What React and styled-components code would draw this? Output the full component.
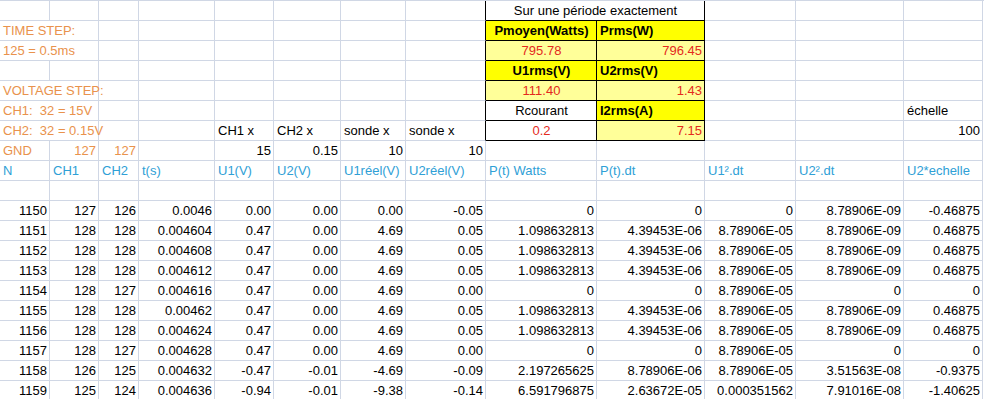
import styled, { createGlobalStyle } from "styled-components";

const GlobalStyle = createGlobalStyle`
  html, body {
    margin: 0;
    padding: 0;
    background: #ffffff;
  }
  body {
    font-family: "Liberation Sans", Arial, sans-serif;
    font-size: 13px;
    color: #000000;
    overflow: hidden;
  }
`;

const GRID = "#d0d7e5";
const ORANGE = "#e9924c";
const BLUE = "#2fa0d6";
const RED = "#e42a1d";
const YELLOW = "#ffff00";
const PALE = "#ffff99";

const COLUMNS = [50, 49, 40, 76, 59, 67, 65, 80, 111, 108, 91, 108, 79];

const Sheet = styled.div`
  width: 984px;
  height: 399px;
  overflow: hidden;
  border-top: 1px solid ${GRID};
  box-sizing: border-box;
  display: flex;
  flex-direction: column;
`;

const Row = styled.div`
  display: grid;
  grid-template-columns: ${COLUMNS.map((w) => `${w}px`).join(" ")};
  height: 20px;
  flex-shrink: 0;
`;

const Cell = styled.div`
  grid-column: span ${(p) => p.$span || 1};
  box-sizing: border-box;
  height: 20px;
  padding: 0 2px 0 3px;
  line-height: 19px;
  white-space: pre;
  overflow: visible;
  border-right: 1px solid ${(p) => (p.$box || p.$edge ? "#000" : GRID)};
  border-bottom: 1px solid ${(p) => (p.$box ? "#000" : GRID)};
  background: ${(p) => p.$bg || "transparent"};
  color: ${(p) => p.$color || "#000"};
  font-weight: ${(p) => (p.$bold ? 700 : 400)};
  text-align: ${(p) => p.$align || "left"};
`;

const e = {};
const edge = { edge: true };
const lbl = (t, span = 2) => ({ t, span, color: ORANGE });
const head = (t) => ({ t, bold: true, bg: YELLOW, box: true });
const val = (t, align = "right") => ({ t, align, color: RED, bg: PALE, box: true });
const num = (t) => ({ t, align: "right" });
const blanks = (n) => Array.from({ length: n }, () => e);

const topRows = [
  [...blanks(7), edge, { t: "Sur une période exactement", span: 2, align: "center", box: true }, ...blanks(3)],
  [lbl("TIME STEP:"), ...blanks(5), edge, { ...head("Pmoyen(Watts)"), align: "center" }, head("Prms(W)"), ...blanks(3)],
  [lbl("125 = 0.5ms"), ...blanks(5), edge, val("795.78", "center"), val("796.45"), ...blanks(3)],
  [...blanks(7), edge, { ...head("U1rms(V)"), align: "center" }, head("U2rms(V)"), ...blanks(3)],
  [lbl("VOLTAGE STEP:"), ...blanks(5), edge, val("111.40", "center"), val("1.43"), ...blanks(3)],
  [lbl("CH1:  32 = 15V"), ...blanks(5), edge, { t: "Rcourant", align: "center", box: true }, head("I2rms(A)"), e, e, { t: "échelle" }],
  [
    lbl("CH2:  32 = 0.15V"), e, e,
    { t: "CH1 x" }, { t: "CH2 x" }, { t: "sonde x" }, { t: "sonde x", edge: true },
    { t: "0.2", align: "center", color: RED, box: true }, val("7.15"), e, e, num("100"),
  ],
  [
    lbl("GND", 1), { t: "127", align: "right", color: ORANGE }, { t: "127", align: "right", color: ORANGE }, e,
    num("15"), num("0.15"), num("10"), num("10"), ...blanks(5),
  ],
  ["N", "CH1", "CH2", "t(s)", "U1(V)", "U2(V)", "U1réel(V)", "U2réel(V)", "P(t) Watts", "P(t).dt", "U1².dt", "U2².dt", "U2*echelle"].map(
    (t) => ({ t, color: BLUE })
  ),
  blanks(13),
];

const data = [
  ["1150", "127", "126", "0.0046", "0.00", "0.00", "0.00", "-0.05", "0", "0", "0", "8.78906E-09", "-0.46875"],
  ["1151", "128", "128", "0.004604", "0.47", "0.00", "4.69", "0.05", "1.098632813", "4.39453E-06", "8.78906E-05", "8.78906E-09", "0.46875"],
  ["1152", "128", "128", "0.004608", "0.47", "0.00", "4.69", "0.05", "1.098632813", "4.39453E-06", "8.78906E-05", "8.78906E-09", "0.46875"],
  ["1153", "128", "128", "0.004612", "0.47", "0.00", "4.69", "0.05", "1.098632813", "4.39453E-06", "8.78906E-05", "8.78906E-09", "0.46875"],
  ["1154", "128", "127", "0.004616", "0.47", "0.00", "4.69", "0.00", "0", "0", "8.78906E-05", "0", "0"],
  ["1155", "128", "128", "0.00462", "0.47", "0.00", "4.69", "0.05", "1.098632813", "4.39453E-06", "8.78906E-05", "8.78906E-09", "0.46875"],
  ["1156", "128", "128", "0.004624", "0.47", "0.00", "4.69", "0.05", "1.098632813", "4.39453E-06", "8.78906E-05", "8.78906E-09", "0.46875"],
  ["1157", "128", "127", "0.004628", "0.47", "0.00", "4.69", "0.00", "0", "0", "8.78906E-05", "0", "0"],
  ["1158", "126", "125", "0.004632", "-0.47", "-0.01", "-4.69", "-0.09", "2.197265625", "8.78906E-06", "8.78906E-05", "3.51563E-08", "-0.9375"],
  ["1159", "125", "124", "0.004636", "-0.94", "-0.01", "-9.38", "-0.14", "6.591796875", "2.63672E-05", "0.000351562", "7.91016E-08", "-1.40625"],
];

const rows = [...topRows, ...data.map((r) => r.map(num))];

export default function App() {
  return (
    <>
      <GlobalStyle />
      <Sheet>
        {rows.map((cells, i) => (
          <Row key={i}>
            {cells.map((c, j) => (
              <Cell
                key={j}
                $span={c.span}
                $align={c.align}
                $color={c.color}
                $bg={c.bg}
                $bold={c.bold}
                $box={c.box}
                $edge={c.edge}
              >
                {c.t}
              </Cell>
            ))}
          </Row>
        ))}
      </Sheet>
    </>
  );
}
